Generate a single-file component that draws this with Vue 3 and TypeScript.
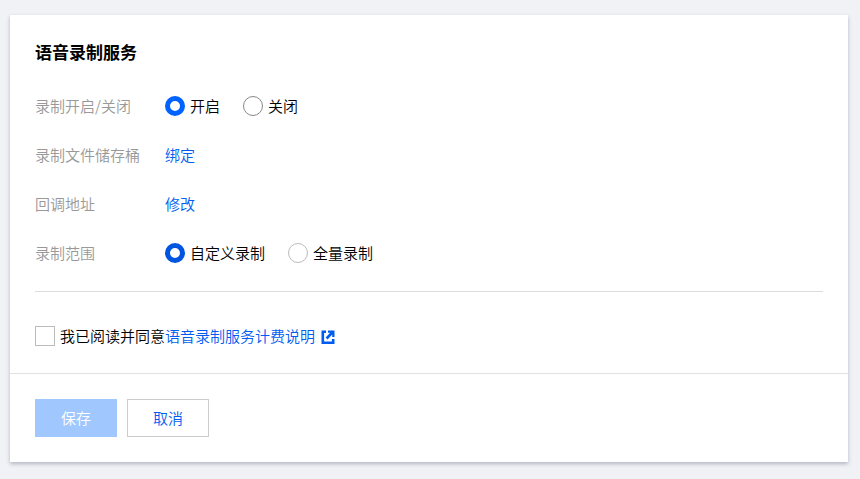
<script setup lang="ts">
import { ref } from 'vue'

const enabled = ref<'on' | 'off'>('on')
const scope = ref<'custom' | 'all'>('custom')
const agreed = ref(false)
</script>

<template>
  <main class="page">
    <form class="card" @submit.prevent>
      <section class="body">
        <h1 class="title">语音录制服务</h1>
        <div class="fields">
          <div class="row" role="radiogroup" aria-labelledby="lbl-enabled">
            <span id="lbl-enabled" class="label">录制开启/关闭</span>
            <div class="options">
              <label class="choice"><input v-model="enabled" class="radio dark" type="radio" name="enabled" value="on" />开启</label>
              <label class="choice"><input v-model="enabled" class="radio dark" type="radio" name="enabled" value="off" />关闭</label>
            </div>
          </div>
          <div class="row">
            <span class="label">录制文件储存桶</span>
            <a class="link" href="#">绑定</a>
          </div>
          <div class="row">
            <span class="label">回调地址</span>
            <a class="link" href="#">修改</a>
          </div>
          <div class="row" role="radiogroup" aria-labelledby="lbl-scope">
            <span id="lbl-scope" class="label">录制范围</span>
            <div class="options">
              <label class="choice"><input v-model="scope" class="radio" type="radio" name="scope" value="custom" />自定义录制</label>
              <label class="choice"><input v-model="scope" class="radio" type="radio" name="scope" value="all" />全量录制</label>
            </div>
          </div>
        </div>
        <div class="agreement">
          <label class="choice"><input v-model="agreed" class="check" type="checkbox" />我已阅读并同意</label>
          <a class="link external" href="#">语音录制服务计费说明
            <svg class="icon" viewBox="0 0 14 14" aria-hidden="true">
              <path d="M5 1.8H1.8V12.7H12.2V9" fill="none" stroke="currentColor" stroke-width="2.6" />
              <path d="M7 0.5H13.5V7H11.2V4.6L6.6 9.6L4.6 7.6L9.2 2.8H7Z" fill="currentColor" />
            </svg>
          </a>
        </div>
      </section>
      <footer class="footer">
        <button class="btn primary" type="submit" :disabled="!agreed">保存</button>
        <button class="btn" type="button">取消</button>
      </footer>
    </form>
  </main>
</template>

<style>
body {
  margin: 0;
  background: #f0f2f6;
}
</style>

<style scoped>
.page {
  padding: 15px 12px 16px 10px;
  font-family: "Noto Sans CJK SC", sans-serif;
  font-size: 15px;
  font-weight: 350;
  line-height: 20px;
  color: #000;
}
.card {
  background: #fff;
  box-shadow: 0 2px 4px rgba(54, 58, 80, 0.32);
}
.body {
  padding: 25px 25px 27px;
}
.title {
  margin: 0;
  font-size: 17px;
  line-height: 24px;
  font-weight: 700;
}
.fields {
  display: flex;
  flex-direction: column;
  gap: 29px;
  padding: 32px 0 28px;
  border-bottom: 1px solid #dcdcdc;
}
.row {
  display: flex;
  align-items: center;
}
.label {
  width: 130px;
  flex: none;
  color: #999;
}
.options {
  display: flex;
  gap: 23px;
}
.choice {
  display: flex;
  align-items: center;
  gap: 5px;
}
.radio,
.check {
  appearance: none;
  box-sizing: border-box;
  flex: none;
  width: 20px;
  height: 20px;
  margin: 0;
  border: 1px solid #bbb;
  background: #fff;
}
.radio {
  border-radius: 50%;
}
.radio.dark {
  border-color: #888;
}
.radio:checked {
  border: 5px solid #0055e0;
}
.radio.dark:checked {
  border-color: #0062ff;
}
.check:checked {
  background: #006eff;
}
.link {
  color: #005cf0;
  text-decoration: none;
}
.agreement {
  display: flex;
  align-items: center;
  padding-top: 34px;
}
.external {
  display: flex;
  align-items: center;
  gap: 6px;
}
.icon {
  width: 14px;
  height: 14px;
  margin-top: 2px;
}
.footer {
  display: flex;
  gap: 10px;
  padding: 25px;
  border-top: 1px solid #e2e2e2;
}
.btn {
  box-sizing: border-box;
  min-width: 82px;
  height: 38px;
  padding: 0 20px;
  border: 1px solid #ccc;
  background: #fff;
  color: #005cf0;
  font: inherit;
}
.primary {
  border-color: #006eff;
  background: #006eff;
  color: #fff;
}
.primary:disabled {
  border-color: #a0c8ff;
  background: #a0c8ff;
}
</style>
